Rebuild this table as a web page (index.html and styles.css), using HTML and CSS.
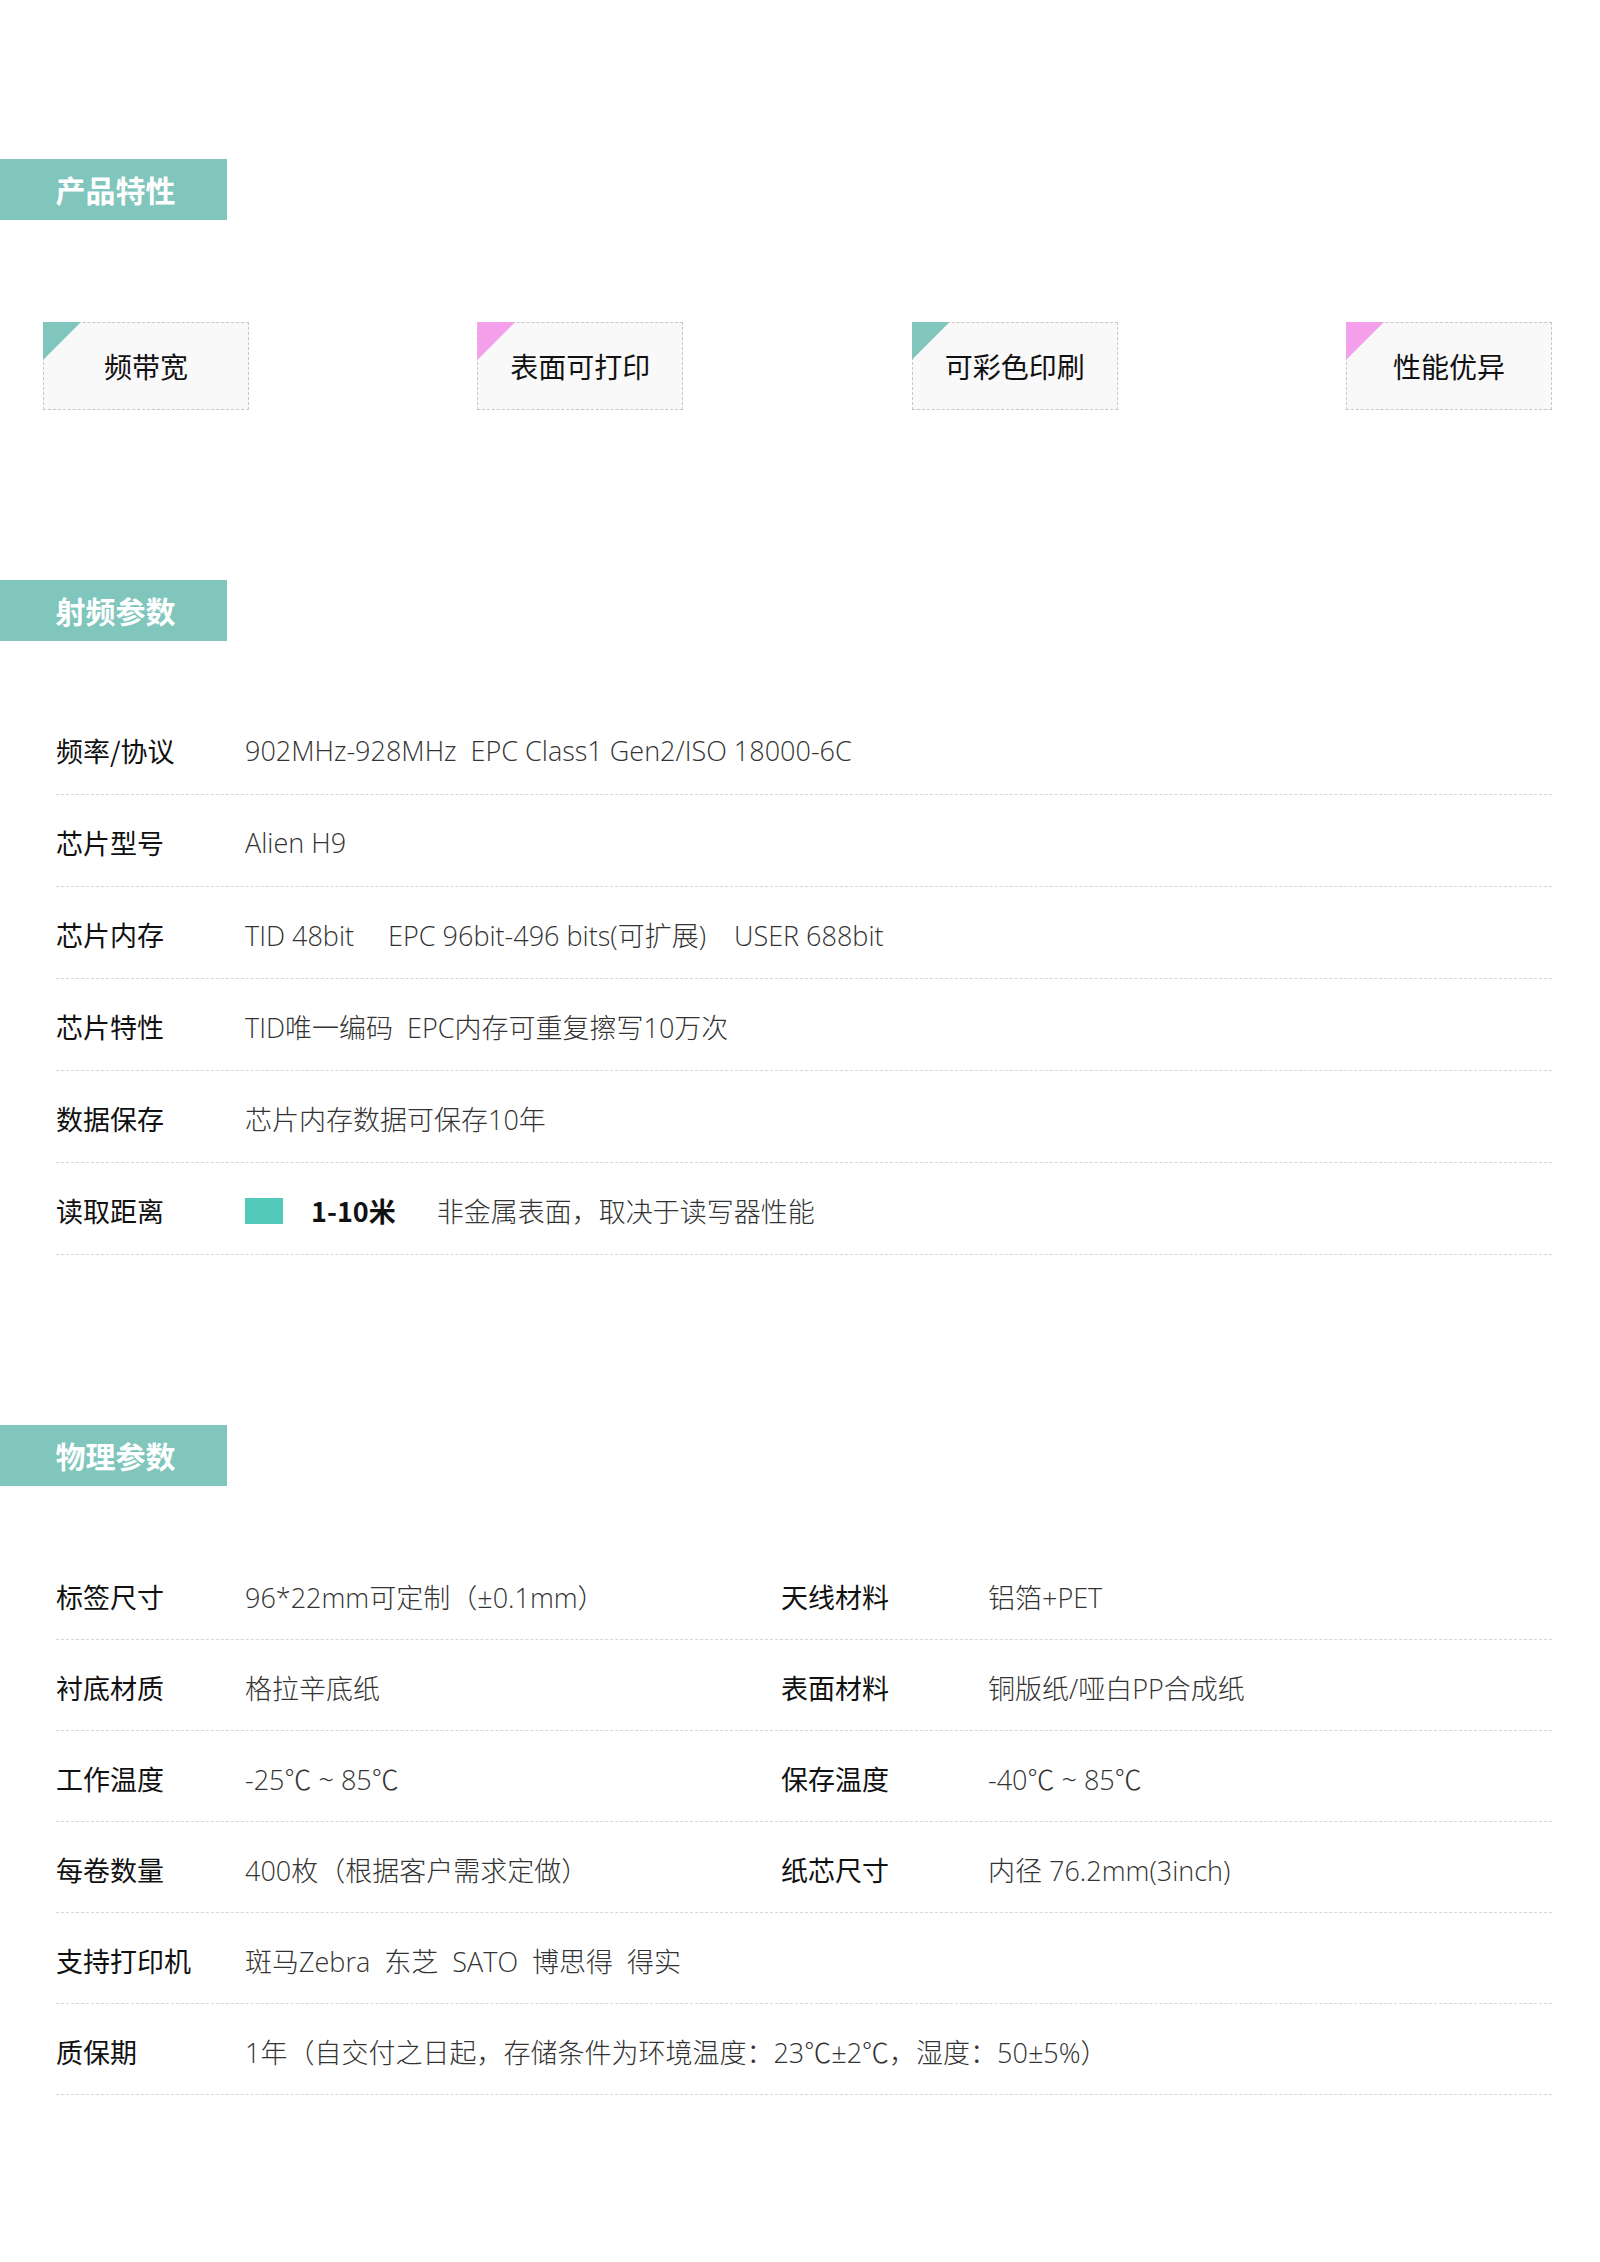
FILE: index.html
```html
<!DOCTYPE html>
<html lang="zh-CN">
<head>
<meta charset="utf-8">
<title>产品参数</title>
<link rel="stylesheet" href="styles.css">
</head>
<body>
<div class="page">
  <h2 class="section-title first">产品特性</h2>
  <div class="features">
    <div class="feature teal"><span>频带宽</span></div>
    <div class="feature pink"><span>表面可打印</span></div>
    <div class="feature teal"><span>可彩色印刷</span></div>
    <div class="feature pink"><span>性能优异</span></div>
  </div>

  <h2 class="section-title rf-title">射频参数</h2>
  <div class="table rf">
    <div class="row"><div class="label">频率/协议</div><div class="value">902MHz-928MHz&nbsp;&nbsp;EPC Class1 Gen2/ISO 18000-6C</div></div>
    <div class="row"><div class="label">芯片型号</div><div class="value">Alien H9</div></div>
    <div class="row"><div class="label">芯片内存</div><div class="value"><span class="gap1">TID 48bit</span><span class="gap2">EPC 96bit-496 bits(可扩展)</span><span>USER 688bit</span></div></div>
    <div class="row"><div class="label">芯片特性</div><div class="value">TID唯一编码&nbsp;&nbsp;EPC内存可重复擦写10万次</div></div>
    <div class="row"><div class="label">数据保存</div><div class="value">芯片内存数据可保存10年</div></div>
    <div class="row"><div class="label">读取距离</div><div class="value range"><span class="swatch"></span><strong class="dist">1-10米</strong><span>非金属表面，取决于读写器性能</span></div></div>
  </div>

  <h2 class="section-title phys-title">物理参数</h2>
  <div class="table phys">
    <div class="row"><div class="label">标签尺寸</div><div class="value half">96*22mm可定制（±0.1mm）</div><div class="label label2">天线材料</div><div class="value">铝箔+PET</div></div>
    <div class="row"><div class="label">衬底材质</div><div class="value half">格拉辛底纸</div><div class="label label2">表面材料</div><div class="value">铜版纸/哑白PP合成纸</div></div>
    <div class="row"><div class="label">工作温度</div><div class="value half">-25℃ ~ 85℃</div><div class="label label2">保存温度</div><div class="value">-40℃ ~ 85℃</div></div>
    <div class="row"><div class="label">每卷数量</div><div class="value half">400枚（根据客户需求定做）</div><div class="label label2">纸芯尺寸</div><div class="value">内径 76.2mm(3inch)</div></div>
    <div class="row"><div class="label">支持打印机</div><div class="value">斑马Zebra&nbsp;&nbsp;东芝&nbsp;&nbsp;SATO&nbsp;&nbsp;博思得&nbsp;&nbsp;得实</div></div>
    <div class="row"><div class="label">质保期</div><div class="value">1年（自交付之日起，存储条件为环境温度：23℃±2℃，湿度：50±5%）</div></div>
  </div>
</div>
</body>
</html>
```

FILE: styles.css
```css
* { box-sizing: border-box; }

html, body {
  margin: 0;
  padding: 0;
  background: #ffffff;
}

body {
  font-family: "Noto Sans CJK SC", "Noto Sans", sans-serif;
  color: #111111;
}

.page {
  width: 1600px;
  min-height: 2262px;
  padding-top: 159px;
}

.section-title {
  margin: 0;
  width: 227px;
  height: 61px;
  background: #80c6bc;
  color: #ffffff;
  font-size: 30px;
  font-weight: 700;
  line-height: 61px;
  text-align: center;
  padding-left: 4px;
}

.features {
  display: flex;
  justify-content: space-between;
  padding: 0 48px 0 43px;
  margin-top: 102px;
}

.feature {
  position: relative;
  width: 206px;
  height: 88px;
  background: #f9f9f9;
  border: 1px dashed #c8c8c8;
  display: flex;
  align-items: center;
  justify-content: center;
  font-size: 28px;
  color: #111111;
}

.feature::before {
  content: "";
  position: absolute;
  left: -1px;
  top: -1px;
  width: 38px;
  height: 38px;
  clip-path: polygon(0 0, 100% 0, 0 100%);
}

.feature.teal::before { background: #80c6bc; }
.feature.pink::before { background: #f49fea; }

.rf-title { margin-top: 170px; }
.phys-title { margin-top: 170px; }

.table {
  margin: 0 48px 0 56px;
}

.rf { margin-top: 62px; }
.phys { margin-top: 63px; }

.row {
  display: flex;
  align-items: center;
  border-bottom: 1px dashed #d6d6d6;
  padding-top: 4px;
  font-size: 27px;
}

.rf .row { height: 92px; }
.phys .row { height: 91px; }

.label {
  width: 189px;
  flex: none;
  color: #111111;
  font-weight: 400;
}

.label2 {
  width: 207px;
}

.value {
  color: #333333;
  font-family: "Open Sans", "Noto Sans CJK SC", sans-serif;
  font-weight: 300;
  white-space: nowrap;
}

.value.half {
  width: 536px;
  flex: none;
}

.gap1 { margin-right: 34px; }
.gap2 { margin-right: 28px; }

.range {
  display: flex;
  align-items: center;
}

.swatch {
  display: inline-block;
  width: 38px;
  height: 26px;
  background: #52c9bb;
  margin-right: 28px;
}

.dist {
  font-family: "Noto Sans CJK SC", sans-serif;
  font-weight: 700;
  color: #111111;
  margin-right: 41px;
}
```
